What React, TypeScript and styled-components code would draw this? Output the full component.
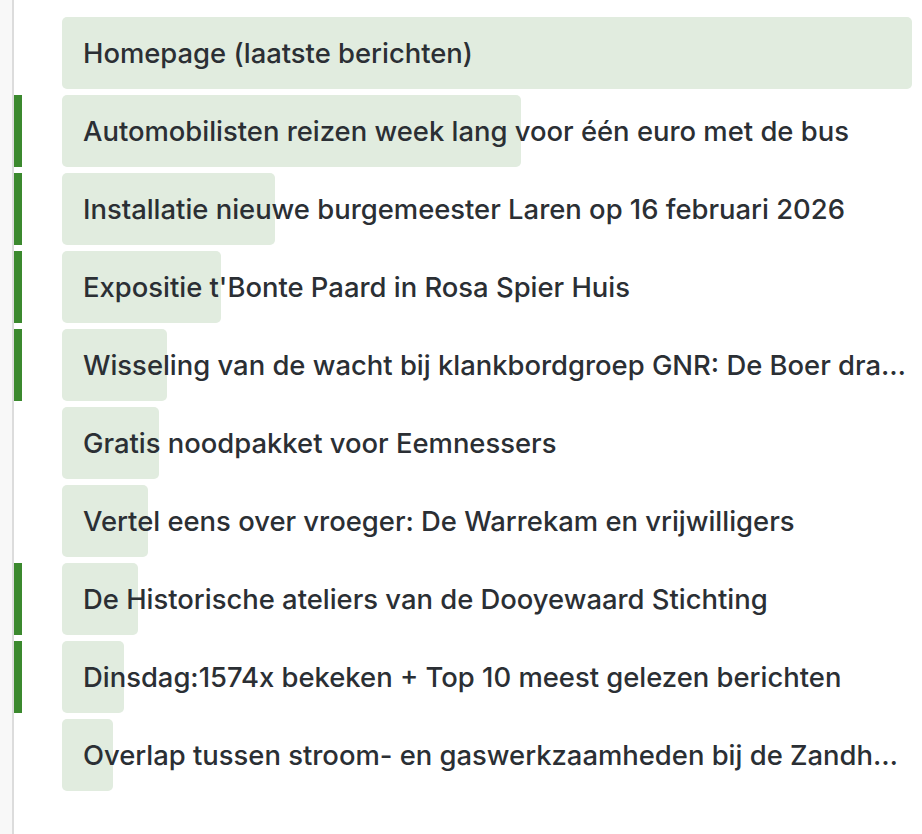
import styled, { createGlobalStyle } from "styled-components"

const GlobalStyle = createGlobalStyle`
    html, body {
        margin: 0;
        padding: 0;
        background: #ffffff;
    }
    body {
        font-family: Inter, "Noto Sans", "Liberation Sans", sans-serif;
        color: #2b2f34;
    }
`

const Page = styled.div`
    display: flex;
    min-height: 100vh;
    width: 922px;
`

const Gutter = styled.div`
    width: 12px;
    flex: none;
    background: #f8f8f8;
    border-right: 2px solid #dcdcdc;
`

const List = styled.ul`
    list-style: none;
    margin: 0;
    padding: 17px 10px 0 0;
    flex: 1;
    min-width: 0;
    display: flex;
    flex-direction: column;
    gap: 6px;
`

const Row = styled.li`
    display: grid;
    grid-template-columns: 8px 1fr;
    column-gap: 40px;
    height: 72px;
`

const Marker = styled.span<{ $active: boolean }>`
    background: ${p => (p.$active ? "#3b892e" : "transparent")};
`

const Item = styled.a`
    position: relative;
    display: block;
    min-width: 0;
    color: inherit;
    text-decoration: none;
`

const Fill = styled.span`
    position: absolute;
    top: 0;
    bottom: 0;
    left: 0;
    background: #e1ecdf;
    border-radius: 5px;
`

const Label = styled.span`
    position: relative;
    display: block;
    padding: 0 2px 0 21px;
    line-height: 72px;
    font-size: 27.4px;
    font-weight: 500;
    white-space: nowrap;
    overflow: hidden;
    text-overflow: ellipsis;
`

const items = [
    { title: "Homepage (laatste berichten)", bar: 850, active: false },
    { title: "Automobilisten reizen week lang voor één euro met de bus", bar: 459, active: true },
    { title: "Installatie nieuwe burgemeester Laren op 16 februari 2026", bar: 213, active: true },
    { title: "Expositie t'Bonte Paard in Rosa Spier Huis", bar: 159, active: true },
    { title: "Wisseling van de wacht bij klankbordgroep GNR: De Boer draagt stokje over", bar: 105, active: true },
    { title: "Gratis noodpakket voor Eemnessers", bar: 97, active: false },
    { title: "Vertel eens over vroeger: De Warrekam en vrijwilligers", bar: 86, active: false },
    { title: "De Historische ateliers van de Dooyewaard Stichting", bar: 76, active: true },
    { title: "Dinsdag:1574x bekeken + Top 10 meest gelezen berichten", bar: 62, active: true },
    { title: "Overlap tussen stroom- en gaswerkzaamheden bij de Zandheuvelweg", bar: 51, active: false },
]

function App() {
    const max = items[0].bar
    return (
        <>
            <GlobalStyle />
            <Page>
                <Gutter />
                <List>
                    {items.map(item => (
                        <Row key={item.title}>
                            <Marker $active={item.active} />
                            <Item href="#">
                                <Fill style={{ width: `${(item.bar / max) * 100}%` }} />
                                <Label>{item.title}</Label>
                            </Item>
                        </Row>
                    ))}
                </List>
            </Page>
        </>
    )
}

export default App
